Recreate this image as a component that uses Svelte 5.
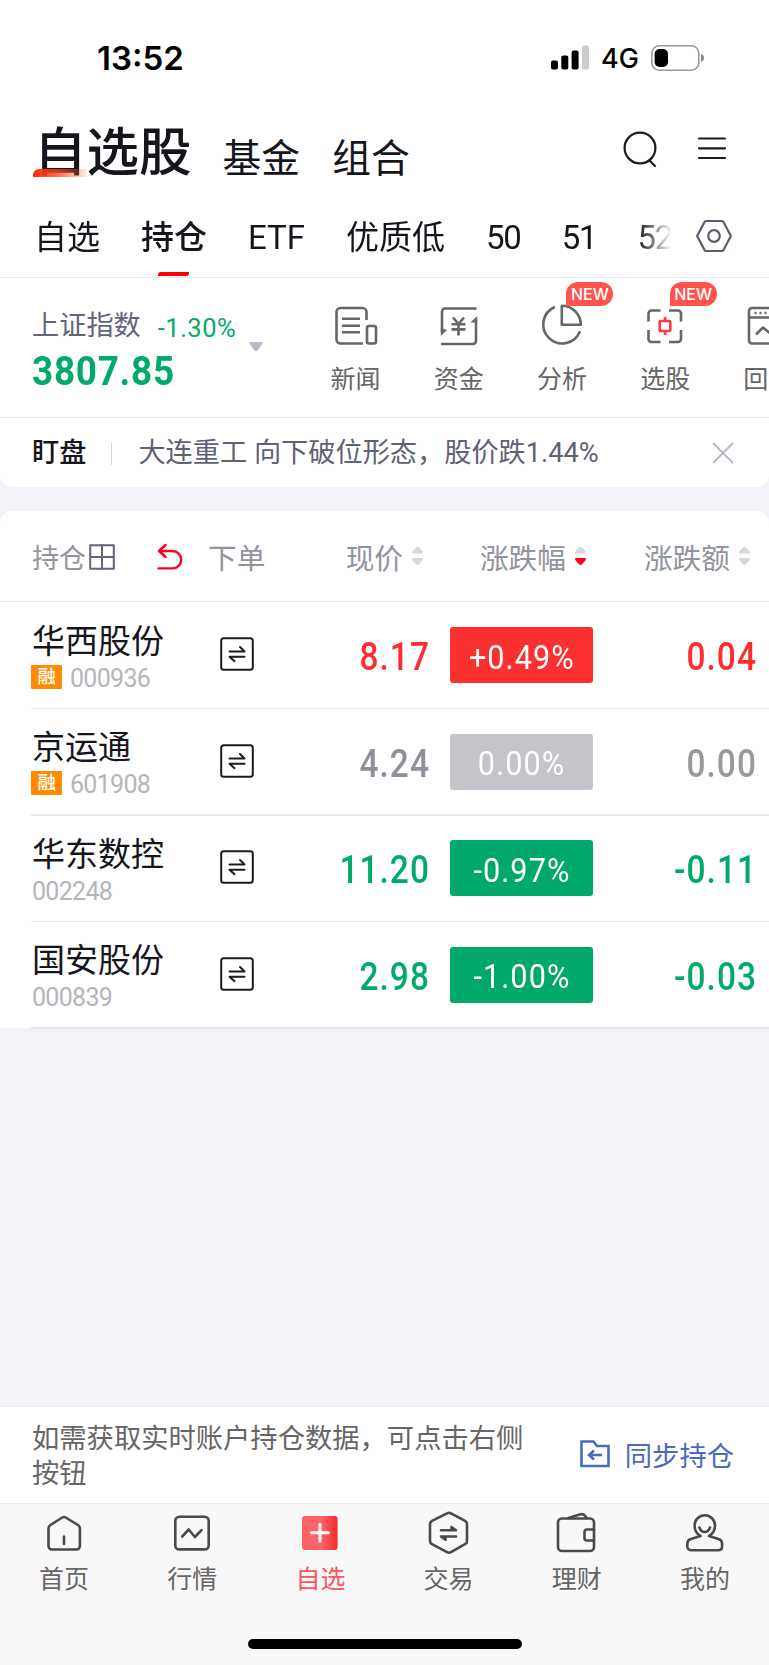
<script>
    let active_tab = $state(1);
    let active_nav = $state(2);
    let notice_open = $state(true);

    const tabs = ["自选", "持仓", "ETF", "优质低", "50", "51", "52"];

    const tools = [
        { id: "news", name: "新闻" },
        { id: "fund", name: "资金" },
        { id: "pie", name: "分析", is_new: true },
        { id: "pick", name: "选股", is_new: true },
        { id: "test", name: "回测" },
    ];

    const columns = [
        { name: "现价", sort: "" },
        { name: "涨跌幅", sort: "down" },
        { name: "涨跌额", sort: "" },
    ];

    const stocks = [
        { name: "华西股份", code: "000936", margin: true, price: "8.17", rate: "+0.49%", diff: "0.04", trend: "up" },
        { name: "京运通", code: "601908", margin: true, price: "4.24", rate: "0.00%", diff: "0.00", trend: "flat" },
        { name: "华东数控", code: "002248", margin: false, price: "11.20", rate: "-0.97%", diff: "-0.11", trend: "down" },
        { name: "国安股份", code: "000839", margin: false, price: "2.98", rate: "-1.00%", diff: "-0.03", trend: "down" },
    ];

    const nav = [
        { id: "home", name: "首页" },
        { id: "market", name: "行情" },
        { id: "mine", name: "自选" },
        { id: "trade", name: "交易" },
        { id: "wallet", name: "理财" },
        { id: "user", name: "我的" },
    ];
</script>

<div class="page">
    <div class="status">
        <span class="time">13:52</span>
        <div class="status-right">
            <svg width="38" height="25" viewBox="0 0 38 25">
                <rect x="0" y="15.5" width="7" height="9" rx="2" />
                <rect x="10.3" y="10.5" width="7" height="14" rx="2" />
                <rect x="20.6" y="5.5" width="7" height="19" rx="2" />
                <rect x="31" y="0.5" width="7" height="24" rx="2" fill="#ccc" />
            </svg>
            <span class="network">4G</span>
            <svg width="54" height="26" viewBox="0 0 54 26">
                <rect x="0.8" y="0.8" width="47" height="24.4" rx="7.5" fill="none" stroke="#999" stroke-width="1.6" />
                <rect x="3.6" y="4" width="13.4" height="18" rx="5" />
                <path d="M50 9c4 1.200 4 6.800 0 8z" fill="#888" />
            </svg>
        </div>
    </div>

    <header>
        <h1>自选股</h1>
        <span class="section">基金</span>
        <span class="section">组合</span>
        <svg class="search" width="36" height="38" viewBox="0 0 36 38">
            <circle cx="18" cy="17" r="15.400" />
            <path d="M27.500 29.500l5.500 5.500" />
        </svg>
        <svg width="30" height="38" viewBox="0 0 30 38">
            <path d="M2 7.500h26M2 17.300h26M2 27h26" />
        </svg>
    </header>

    <nav class="tabs">
        <div class="tab-list">
            {#each tabs as tab, i}
                <button class:active={active_tab === i} class:number={i > 3} onclick={() => (active_tab = i)}>{tab}</button>
            {/each}
        </div>
        <svg width="36" height="34" viewBox="0 0 36 34">
            <path d="M10 2h16q1 0 1.500 1L34.500 16.200q.5.800 0 1.600L27.500 31q-.5 1-1.500 1H10q-1 0-1.500-1L1.500 17.800q-.5-.8 0-1.600L8.500 3q.5-1 1.500-1z" />
            <circle cx="18" cy="17" r="5.800" />
        </svg>
    </nav>

    <section class="overview">
        <div class="index">
            <div class="index-top">
                <span class="index-name">上证指数</span>
                <span class="index-rate">-1.30%</span>
            </div>
            <div class="index-value">3807.85</div>
        </div>
        <svg class="caret" width="14" height="10" viewBox="0 0 14 10">
            <path d="M1.500 0h11q2 .5 1 2L8.500 8.500q-1.500 1.400-3 0L.5 2q-1-1.500 1-2z" />
        </svg>
        <div class="tools">
            {#each tools as tool}
                <div class="tool">
                    <svg width="44" height="44" viewBox="0 0 44 44">
                        {#if tool.id === "news"}
                            <path d="M32.500 16V8a4 4 0 0 0-4-4H6.500a4 4 0 0 0-4 4v27.500a4 4 0 0 0 4 4h22.500M8 14.700h18M8 21.700h18M8 28.300h18" />
                            <rect x="33" y="22" width="9" height="17.500" rx="2" />
                        {:else if tool.id === "fund"}
                            <path d="M39.500 4.500H8a3 3 0 0 0-3 3V28M4 40h32a3 3 0 0 0 3-3V15M16 13.500l5.500 6.500 5.500-6.500M21.500 20v11.500M14.500 20.200h14M14.500 25.400h14" />
                            <path class="solid" d="M3.800 24v8l6.200-6zM40.200 12.200V18.500h-7z" />
                        {:else if tool.id === "pie"}
                            <path d="M14.800 3A19 19 0 1 0 40 27.300M21.800 1.700v19h19a19 19 0 0 0-19-19z" />
                        {:else if tool.id === "pick"}
                            <path d="M17.500 6.500h-9a3 3 0 0 0-3 3v8M26 6.500h9a3 3 0 0 1 3 3v8M5.500 26v9a3 3 0 0 0 3 3h9M38 26v9a3 3 0 0 1-3 3h-9" />
                            <path class="red" d="M17.500 17h9q.8 0 .8.800v8.400q0 .8-.8.800h-9q-.8 0-.8-.8v-8.400q0-.8.8-.8zM22 13v4M22 27v4" />
                        {:else}
                            <rect x="3" y="4" width="38" height="35.500" rx="3" />
                            <path d="M3 13.500h38M10 30.500l7-7 6 5 9-8M8.500 9h2M13.500 9h2M18.500 9h2" />
                        {/if}
                    </svg>
                    <span>{tool.name}</span>
                    {#if tool.is_new}
                        <b class="new">NEW</b>
                    {/if}
                </div>
            {/each}
        </div>
    </section>

    {#if notice_open}
        <section class="alert">
            <b>盯盘</b>
            <i></i>
            <span>大连重工 向下破位形态，股价跌1.44%</span>
            <button aria-label="关闭" onclick={() => (notice_open = false)}>
                <svg width="22" height="22" viewBox="0 0 22 22"><path d="M1.500 1.500l19 19M20.500 1.500l-19 19" /></svg>
            </button>
        </section>
    {/if}

    <section class="table">
        <div class="grid head">
            <div class="holding">
                <span>持仓</span>
                <svg width="26" height="26" viewBox="0 0 26 26"><path d="M1.200 1.200h23.600v23.600H1.200zM13 1v24M1 13h24" /></svg>
                <svg class="undo" width="26" height="26" viewBox="0 0 26 26">
                    <path d="M8.500 1L2 7l6.500 6M2 7h13.500a8.700 8.700 0 0 1 0 17.400H1.500" />
                </svg>
            </div>
            <span>下单</span>
            {#each columns as column}
                <div class="sortable">
                    <span>{column.name}</span>
                    <svg width="11" height="20" viewBox="0 0 11 20">
                        <path d="M.5 7.500q-1-1.800.8-3.300L4 1.500q1.500-1.400 3 0l2.700 2.700q1.800 1.500.8 3.300z" />
                        <path class:on={column.sort === "down"} d="M.5 12q-1 1.800.8 3.300L4 18.300q1.500 1.400 3 0l2.700-3q1.800-1.500.8-3.300z" />
                    </svg>
                </div>
            {/each}
        </div>
        {#each stocks as stock}
            <div class="grid row {stock.trend}">
                <div class="stock">
                    <div class="stock-name">{stock.name}</div>
                    <div class="stock-code">
                        {#if stock.margin}
                            <em>融</em>
                        {/if}
                        <span>{stock.code}</span>
                    </div>
                </div>
                <svg class="order" width="34" height="34" viewBox="0 0 34 34">
                    <rect x="1.200" y="1.200" width="31.600" height="31.600" rx="2.500" />
                    <path d="M9.500 14.500h15L20 10M24.500 19.700H9.500l5 4.500" />
                </svg>
                <div class="price">{stock.price}</div>
                <div class="rate"><span>{stock.rate}</span></div>
                <div class="diff">{stock.diff}</div>
            </div>
        {/each}
    </section>

    <section class="sync">
        <p>如需获取实时账户持仓数据，可点击右侧按钮</p>
        <svg width="30" height="28" viewBox="0 0 30 28">
            <path d="M1.500 1.500h12l3.500 4.500h11.500v20H1.500z" />
            <path d="M22 15H9M14 10.500L9 15l5 4.500" />
        </svg>
        <span>同步持仓</span>
    </section>

    <footer>
        <div class="nav-list">
            {#each nav as item, i}
                <button class:active={active_nav === i} onclick={() => (active_nav = i)}>
                    <svg width="44" height="44" viewBox="0 0 44 44">
                        {#if item.id === "home"}
                            <path d="M20.300 6.500q1.700-1 3.400 0L36 14q1.900 1.200 1.900 3.400V35a3.500 3.500 0 0 1-3.500 3.500H10A3.500 3.500 0 0 1 6.500 35V17.400Q6.500 15.200 8.400 14zM22 25.500v7.500" />
                        {:else if item.id === "market"}
                            <rect x="5.300" y="5.800" width="33.400" height="32.600" rx="4" />
                            <path d="M12.200 25.500l6.500-7 6.200 7.500 6.600-6.800" />
                        {:else if item.id === "mine"}
                            <defs>
                                <linearGradient id="plus">
                                    <stop offset="0.55" stop-color="#fd6366" />
                                    <stop offset="1" stop-color="#f02b2b" />
                                </linearGradient>
                            </defs>
                            <rect class="filled" x="4" y="5" width="35.600" height="34" rx="3" fill="url(#plus)" />
                            <path class="plus" d="M13.500 21.800h17M22 13.300v17" />
                        {:else if item.id === "trade"}
                            <path d="M20 2.300q2-1.100 4 0l14 7.500q2 1.100 2 3.200v17q0 2.100-2 3.200L24 41.200q-2 1.100-4 0L5 33.200q-2-1.100-2-3.200V13q0-2.100 2-3.200z" />
                            <path d="M14 19.200h15l-4.500-3.200v3M29 25.500H14l4.500 3.200v-3" />
                        {:else if item.id === "wallet"}
                            <rect x="3" y="7.500" width="36" height="32.500" rx="4" />
                            <path d="M39 18.500h-7a2.500 2.500 0 0 0-2.500 2.500v6a2.500 2.500 0 0 0 2.500 2.500h7M13.500 7l12-3.700q3-.6 4.500 1.500l1.500 2.200" />
                        {:else}
                            <path d="M17.500 25C13 22.500 11.600 19.500 11.600 14.500a10.200 10.200 0 0 1 20.400 0c0 5-1.500 8-6 10.500l9.500 3q3.600 1 3.600 4.800v2.400q0 4-4 4H8.300q-4 0-4-4v-2.400q0-3.800 3.600-4.800zM16.400 16.500q1.500 4.500 5.300 4.500t5.300-4.500" />
                        {/if}
                    </svg>
                    <span>{item.name}</span>
                </button>
            {/each}
        </div>
        <div class="home-bar"></div>
    </footer>
</div>

<style>
    :global(body) {
        background: #f2f3f9;
    }
    .page {
        display: flex;
        flex-direction: column;
        width: 769px;
        height: 1665px;
        overflow: hidden;
        background: #f2f3f9;
        color: #15161b;
        font-family: Roboto, "Noto Sans CJK SC", sans-serif;
        line-height: 1;
        white-space: nowrap;
    }
    svg {
        flex: none;
        fill: none;
        stroke-linecap: round;
        stroke-linejoin: round;
    }
    button {
        padding: 0;
        border: 0;
        background: none;
        color: inherit;
        font: inherit;
    }

    .status {
        display: flex;
        justify-content: space-between;
        align-items: center;
        box-sizing: border-box;
        height: 105px;
        padding: 10px 64px 0 97px;
        background: #fff;
        color: #000;
        font-family: Inter, sans-serif;
    }
    .time {
        margin-top: 2px;
        font-size: 33px;
        font-weight: 600;
    }
    .status-right {
        display: flex;
        align-items: center;
    }
    .status-right svg {
        fill: #000;
    }
    .network {
        margin: 1px 12px 0 12px;
        font-size: 27px;
        font-weight: 500;
    }

    header {
        display: flex;
        align-items: center;
        height: 90px;
        padding: 0 42px 0 34px;
        background: #fff;
    }
    header svg {
        stroke: #1b1c22;
        stroke-width: 2.200;
    }
    h1 {
        position: relative;
        margin: 7px 31px 0 0;
        font-size: 52.500px;
        font-weight: 500;
    }
    h1::after {
        content: "";
        position: absolute;
        left: -1px;
        bottom: 3px;
        width: 54px;
        height: 8px;
        border-radius: 6px 0 0 0;
        background: linear-gradient(90deg, #fb2a06, rgba(255, 70, 30, 0.75) 50%, rgba(255, 120, 90, 0.1));
    }
    .section {
        margin: 18px 32px 0 0;
        font-size: 38.800px;
    }
    .search {
        margin: 0 39px 0 auto;
    }

    .tabs {
        display: flex;
        align-items: center;
        justify-content: space-between;
        height: 82px;
        padding-right: 37px;
        border-bottom: 1px solid #ebebf2;
        background: #fff;
    }
    .tab-list {
        display: flex;
        gap: 41px;
        width: 638px;
        height: 82px;
        padding-left: 34px;
        overflow: hidden;
        -webkit-mask-image: linear-gradient(90deg, #000 638px, transparent 672px);
        mask-image: linear-gradient(90deg, #000 638px, transparent 672px);
    }
    .tab-list button {
        position: relative;
        flex: none;
        padding-top: 2px;
        font-size: 33px;
    }
    .tab-list .number {
        letter-spacing: -1.200px;
    }
    .tab-list .active {
        font-weight: 500;
    }
    .tab-list .active::after {
        content: "";
        position: absolute;
        left: 50%;
        bottom: 1px;
        width: 31px;
        height: 4px;
        margin-left: -16px;
        border-radius: 3px 0 3px 0;
        background: #fe0000;
    }
    .tabs svg {
        stroke: #5b5d70;
        stroke-width: 2.200;
    }

    .overview {
        display: flex;
        height: 139px;
        border-bottom: 1px solid #e6e6ef;
        background: #fff;
    }
    .index {
        width: 217px;
        padding: 34px 0 0 32px;
    }
    .index-top {
        display: flex;
        align-items: center;
        gap: 17px;
    }
    .index-name {
        color: #62647a;
        font-size: 27.200px;
    }
    .index-rate {
        margin-top: 4px;
        color: #00ab69;
        font-size: 25.500px;
        letter-spacing: 0.500px;
    }
    .index-value {
        margin-top: 9px;
        color: #00ab69;
        font-size: 41px;
        font-weight: 700;
        letter-spacing: 0.800px;
        transform: scaleX(0.9);
        transform-origin: left;
    }
    .caret {
        margin: 64px 41px 0 0;
        fill: #b9bac9;
    }
    .tools {
        display: flex;
        flex: 1;
        overflow: hidden;
    }
    .tool {
        position: relative;
        display: flex;
        flex: none;
        flex-direction: column;
        align-items: center;
        gap: 19px;
        width: 103.200px;
        padding-top: 26px;
        color: #666;
        font-size: 25px;
    }
    .tool span {
        line-height: 26px;
    }
    .tool svg {
        stroke: #666;
        stroke-width: 2.600;
        stroke-linecap: butt;
    }
    .tool .solid {
        fill: #666;
        stroke: none;
    }
    .tool .red {
        stroke: #fb3b3f;
    }
    .new {
        position: absolute;
        top: 4px;
        left: 56px;
        width: 47px;
        height: 24px;
        border-radius: 12px 12px 12px 0;
        background: #ff544d;
        color: #fff;
        font: 500 16px/25px Inter, sans-serif;
        text-align: center;
    }

    .alert {
        display: flex;
        align-items: center;
        height: 69px;
        padding: 0 35px 0 32px;
        border-radius: 0 0 12px 12px;
        background: #fff;
        color: #5f6174;
        font-size: 27.200px;
    }
    .alert b,
    .alert span {
        margin-top: 3px;
    }
    .alert b {
        color: #15161b;
        font-weight: 500;
    }
    .alert i {
        width: 1px;
        height: 22px;
        margin: 3px 26px 0 25px;
        background: #d4d5dc;
    }
    .alert button {
        display: flex;
        margin-left: auto;
    }
    .alert button svg {
        stroke: #b9bac9;
        stroke-width: 2;
    }

    .table {
        margin-top: 24px;
        border-radius: 12px 12px 0 0;
        background: #fff;
    }
    .grid {
        display: grid;
        grid-template-columns: 177px 102px 120px 163px 164px;
        align-items: center;
        padding-left: 31px;
    }
    .head {
        height: 90px;
        border-bottom: 1px solid #e6e6ef;
        color: #92949d;
        font-size: 28.700px;
    }
    .head > * {
        padding-top: 6px;
    }
    .holding {
        display: flex;
        align-items: center;
        padding-left: 1px;
        font-size: 27px;
    }
    .holding svg {
        margin: -5px 0 0 3px;
        stroke: #62647a;
        stroke-width: 2;
    }
    .holding .undo {
        margin-left: 42px;
        stroke: #fe0021;
        stroke-width: 2.400;
    }
    .sortable {
        display: flex;
        align-items: center;
        justify-content: flex-end;
        gap: 9px;
        padding-right: 7px;
    }
    .sortable svg {
        margin-top: -5px;
        fill: #d8d8d8;
    }
    .sortable .on {
        fill: #fe0018;
    }
    .row {
        position: relative;
        height: 106.500px;
    }
    .row::after {
        content: "";
        position: absolute;
        right: 0;
        bottom: -0.500px;
        left: 31px;
        height: 1.500px;
        background: #e6e6ef;
    }
    .stock {
        padding-left: 1px;
    }
    .stock-name {
        padding-top: 1px;
        font-size: 33px;
        line-height: 38px;
    }
    .stock-code {
        display: flex;
        align-items: center;
        height: 24px;
        margin-top: 4px;
        color: #b5b6ba;
        font-size: 25px;
        letter-spacing: -0.700px;
    }
    .stock-code span {
        margin-top: 3px;
    }
    .stock-code em {
        width: 31px;
        height: 24px;
        margin: 0 8px 0 -1px;
        border-radius: 1px;
        background: #ff8b00;
        color: #fff;
        font-size: 18.500px;
        font-style: normal;
        font-weight: 500;
        line-height: 25px;
        text-align: center;
    }
    .order {
        margin: -2px 0 0 12px;
        stroke: #1b1c22;
        stroke-width: 2;
    }
    .price,
    .diff {
        padding-top: 4px;
        color: #00ab69;
        font-size: 38px;
        font-weight: 500;
        letter-spacing: 1.200px;
        text-align: right;
        transform: scaleX(0.88);
        transform-origin: right;
    }
    .rate {
        display: flex;
        justify-content: center;
        align-items: center;
        height: 56px;
        margin-left: 20px;
        border-radius: 3px;
        background: #00a96b;
        color: #fff;
        font-size: 34px;
        letter-spacing: 1.200px;
    }
    .rate span {
        margin-top: 3px;
        transform: scaleX(0.9);
    }
    .up .price,
    .up .diff {
        color: #fb2d2f;
    }
    .up .rate {
        background: #fb3030;
    }
    .flat .price {
        color: #8f9099;
    }
    .flat .diff {
        color: #999;
    }
    .flat .rate {
        background: #c4c5ca;
    }

    .sync {
        display: flex;
        align-items: center;
        height: 96px;
        margin-top: auto;
        padding: 0 35px 0 32px;
        border-top: 1px solid #e6e6f2;
        background: #fff;
        color: #666;
        font-size: 27.300px;
    }
    .sync p {
        width: 510px;
        margin: 3px 38px 0 0;
        line-height: 34.500px;
        white-space: normal;
    }
    .sync svg {
        margin-top: -2px;
        stroke: #4a6bbd;
        stroke-width: 2.600;
        stroke-linejoin: miter;
        stroke-linecap: butt;
    }
    .sync span {
        margin: 5px 0 0 auto;
        color: #4a6bbd;
    }

    footer {
        display: flex;
        flex-direction: column;
        align-items: center;
        justify-content: space-between;
        box-sizing: border-box;
        height: 162px;
        padding-bottom: 16px;
        border-top: 1px solid #eee;
        background: #f8f8f8;
    }
    .nav-list {
        display: flex;
        width: 100%;
        padding-top: 7px;
    }
    .nav-list button {
        display: flex;
        flex: 1;
        flex-direction: column;
        align-items: center;
        gap: 12px;
        color: #666;
        font-size: 25px;
        line-height: 26px;
    }
    .nav-list .active {
        color: #fb5558;
    }
    .nav-list svg {
        stroke: #4a4a4a;
        stroke-width: 2.600;
    }
    .nav-list .filled {
        stroke: none;
    }
    .nav-list .plus {
        stroke: #fff;
        stroke-width: 3;
    }
    .home-bar {
        width: 274px;
        height: 10px;
        border-radius: 5px;
        background: #000;
    }
</style>
